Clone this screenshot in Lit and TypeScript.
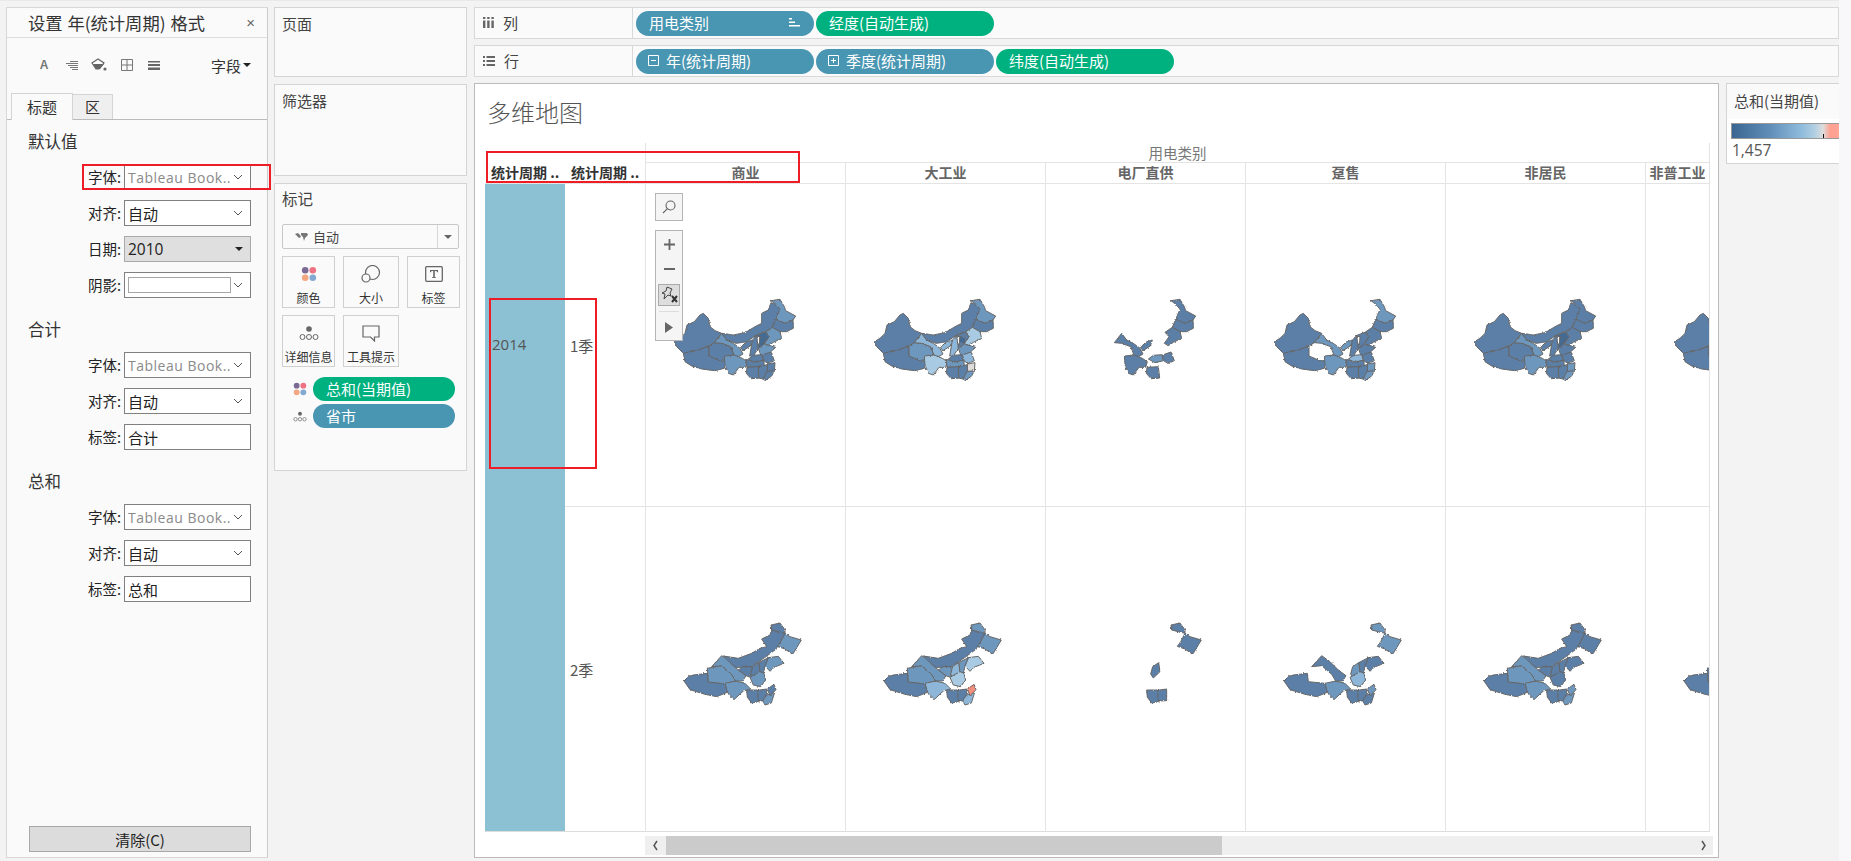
import { LitElement, html, css, svg } from "lit";
import { customElement } from "lit/decorators.js";

const C: Record<string, string> = {
  d: "#5b7fa8", m: "#6e97be", l: "#8db6d8", x: "#a8cbe3", k: "#3f6b98", g: "#dedbd9", s: "#f48f7e",
};

const R1: Record<string, string> = {
  xj: "28,155 45,145 60,130 66,105 88,95 105,75 115,70 130,85 135,110 150,122 170,130 148,158 132,168 100,180 65,190 55,190 35,170",
  xz: "55,190 100,180 132,168 132,198 165,212 185,212 178,235 150,242 110,237 80,228 60,215",
  qh: "132,168 148,158 170,160 197,170 207,195 190,205 165,212 132,198",
  gs: "148,158 170,130 185,150 205,160 225,175 234,192 218,202 207,195 197,170 170,160",
  nm: "170,130 205,135 240,128 270,110 290,100 290,70 310,60 318,38 335,45 345,58 332,88 322,112 300,127 280,132 245,155 215,160 185,150",
  hl: "318,32 345,28 358,50 362,62 392,78 384,90 360,100 332,88 345,58 335,45",
  jl: "332,88 360,100 384,90 385,115 365,125 345,125 322,112",
  ln: "322,112 345,125 350,145 325,157 310,167 298,160 312,140 300,127",
  hb: "270,138 300,127 312,140 298,160 285,175 278,170 284,156 285,140",
  bj: "285,140 300,144 298,160 284,156",
  sx: "262,150 275,138 280,175 265,198 254,198",
  sn: "226,172 245,155 262,150 256,168 234,182",
  sd: "280,175 298,162 332,172 312,190 288,197",
  hn: "265,196 290,194 296,212 270,218 250,207",
  js: "292,195 318,186 328,212 310,220 298,214",
  sc: "178,198 207,195 232,205 247,215 242,232 222,232 205,255 190,250 180,225",
  hub: "244,208 270,216 296,210 298,228 280,232 246,232",
  hun: "246,232 280,230 284,264 258,266 244,250",
  jx: "280,230 307,224 308,255 297,268 282,264",
  zj: "307,222 330,218 328,243 308,245",
  fj: "306,244 328,243 320,258 300,272 295,266",
};

const R2: Record<string, string> = {
  xz: "42,198 55,185 70,180 112,175 115,200 165,205 172,232 140,245 105,238 60,224",
  qh: "112,160 155,152 185,178 197,198 170,207 115,201",
  gs: "125,155 155,122 180,140 205,165 228,182 218,198 197,198 185,178 155,152",
  nm: "160,123 205,130 245,115 270,100 290,95 275,72 300,60 305,45 325,50 345,55 332,80 322,100 285,127 245,155 220,157 195,157",
  ns: "205,165 220,155 248,155 242,187 228,182",
  hu: "303,30 330,24 345,45 345,55 325,50 305,45",
  hl: "345,55 360,65 394,75 385,90 368,118 345,102 322,94 332,80",
  ln: "295,128 325,124 342,145 312,157 300,169 285,153",
  hb: "266,143 295,128 285,153 280,174 270,170",
  sx: "248,155 266,143 270,170 250,189 242,177",
  sd: "240,187 270,170 282,175 287,195 272,215 250,210",
  sc: "165,205 197,198 225,205 242,222 220,228 192,254 175,237",
  a: "230,225 262,225 266,260 245,264 232,247",
  b: "262,226 290,222 290,257 266,258",
  c: "290,240 314,232 304,264 285,270 278,257",
  e: "292,222 312,208 318,224 300,242",
};

type Cell = Record<string, string>;
const all1 = (o: Cell = {}): Cell => ({
  xj: "d", xz: "d", qh: "d", gs: "d", nm: "d", hl: "d", jl: "d", ln: "d", hb: "d", bj: "d", sx: "d", sn: "d",
  sd: "d", hn: "d", js: "d", sc: "d", hub: "d", hun: "d", jx: "d", zj: "d", fj: "d", ...o,
});
const all2 = (o: Cell = {}): Cell => ({
  xz: "d", qh: "d", gs: "d", nm: "d", ns: "d", hu: "d", hl: "d", ln: "d", hb: "d", sx: "d", sd: "d", sc: "d", a: "d", b: "d", c: "d", e: "d", ...o,
});

const ROW1: Cell[] = [
  all1({ gs: "m", sc: "m", ln: "m", hl: "m", bj: "k", hb: "k", sd: "m" }),
  all1({ qh: "m", gs: "l", hl: "m", ln: "x", sx: "l", sn: "l", sc: "x", zj: "g", bj: "k", sd: "m", js: "l", hub: "m", fj: "m" }),
  { hl: "d", jl: "d", gs: "d", sn: "d", sc: "d", hun: "d", hn: "m", js: "d", ln: "d" },
  { xj: "d", xz: "d", gs: "m", sn: "m", hb: "d", sd: "d", hn: "l", sc: "m", hl: "m", jl: "d", ln: "d", sx: "d", hub: "d", hun: "d", jx: "d", zj: "m", fj: "m", js: "d" },
  all1({ sc: "m", bj: "k", hb: "k", gs: "m", qh: "d", zj: "m", fj: "m" }),
  { xj: "d", xz: "d", qh: "d", gs: "d" },
];
const ROW2: Cell[] = [
  all2({ gs: "m", sc: "m", qh: "m", hl: "m", ln: "m", sd: "m", c: "m" }),
  all2({ qh: "m", gs: "m", hl: "m", hu: "m", ln: "x", hb: "m", sx: "l", sd: "x", sc: "l", c: "l", e: "s", ns: "m" }),
  { hu: "d", hl: "d", sx: "d", a: "d", b: "d" },
  { xz: "d", sc: "m", hu: "m", hl: "m", ln: "d", hb: "d", sx: "m", sd: "l", a: "d", b: "d", c: "d", e: "m", gs: "d" },
  all2({ sc: "m", qh: "m", gs: "m", e: "m", c: "m" }),
  { xz: "d", qh: "d" },
];

const chev = html`<svg class="chev" width="10" height="6" viewBox="0 0 10 6"><path d="M1 1l4 4 4-4" fill="none" stroke="#555" stroke-width="1"/></svg>`;

const dots4 = (s: number) => html`<svg width=${s} height=${s} viewBox="0 0 16 16">
  <circle cx="4.2" cy="4.2" r="3.3" fill="#7b6a94"/><circle cx="11.8" cy="4.2" r="3.3" fill="#ef7284"/>
  <circle cx="4.2" cy="11.8" r="3.3" fill="#f2a782"/><circle cx="11.8" cy="11.8" r="3.3" fill="#83a8d1"/></svg>`;
const dotsDetail = (s: number) => html`<svg width=${s} height=${Math.round(s * 0.8)} viewBox="0 0 20 16">
  <circle cx="10" cy="4" r="2.8" fill="#666"/>
  <g fill="none" stroke="#666" stroke-width="1"><circle cx="3.5" cy="12" r="2.5"/><circle cx="10" cy="12" r="2.5"/><circle cx="16.5" cy="12" r="2.5"/></g></svg>`;

@customElement("app-root")
export class AppRoot extends LitElement {
  static styles = css`
    :host { display: block; width: 1851px; height: 861px; background: #f8f8fb; overflow: hidden;
      font-family: "Noto Sans CJK SC", "Open Sans", sans-serif; color: #333; font-size: 14px; position: relative; }
    * { box-sizing: border-box; }
    .page { width: 1839px; height: 861px; background: #f3f3f3; border-top: 1px solid #e9e9e9; padding: 6px 0 3px 6px;
      display: grid; grid-template-columns: 262px 193px 1fr; column-gap: 6px; }
    .fmt { background: #fafafa; border: 1px solid #d8d8d8; border-right-color: #ccc; display: flex; flex-direction: column; }
    .fmt-title { height: 30px; border-bottom: 1px solid #ddd; display: flex; align-items: center; justify-content: space-between;
      padding: 0 12px 0 21px; font-size: 17.3px; color: #333; white-space: nowrap; word-spacing: 1px; }
    .x { font-size: 15px; color: #666; font-family: "Liberation Sans", sans-serif; }
    .tools { height: 54px; display: flex; align-items: center; padding: 0 16px 0 29px; gap: 11.5px; }
    .tools .tb { width: 16px; display: flex; justify-content: center; }
    .a { font: bold 12px "Liberation Sans", sans-serif; color: #777; }
    .field { margin-left: auto; display: flex; align-items: center; gap: 2px; font-size: 15px; color: #333; }
    .tri { width: 0; height: 0; border-left: 4px solid transparent; border-right: 4px solid transparent; border-top: 4px solid #222; }
    .tabs { height: 28px; display: flex; align-items: flex-end; padding-left: 4px; border-bottom: 1px solid #bbb; font-size: 15px; }
    .tab { height: 27px; width: 62px; border: 1px solid #d4d4d4; border-bottom: 0; background: #fafafa; display: flex; align-items: center;
      justify-content: center; margin-bottom: -1px; padding-bottom: 2px; }
    .tab.off { height: 25px; width: 41px; background: #efefef; margin-bottom: 0; margin-left: -1px; }
    .form { padding-top: 11px; flex: 1; display: flex; flex-direction: column; }
    .sec { margin-bottom: 21px; }
    .sec-h { height: 24px; line-height: 20px; font-size: 16.5px; padding-left: 21px; margin-bottom: 9px; color: #333; }
    .row { display: grid; grid-template-columns: 114px 127px; column-gap: 3px; margin-bottom: 10px; align-items: center; }
    .row:last-child { margin-bottom: 0; }
    .row label { text-align: right; font-size: 14.5px; color: #222; line-height: 24px; }
    .ctl { height: 26px; border: 1px solid #808080; background: #fff; display: flex; align-items: center; padding: 0 7px 0 3px;
      justify-content: space-between; font-size: 15px; color: #222; overflow: hidden; white-space: nowrap; }
    .ctl.font { color: #8a8a8a; font-family: "Open Sans", sans-serif; font-size: 14px; letter-spacing: .5px; }
    .ctl.date { background: #dfdfdf; border-color: #aaa; font-family: "Open Sans", sans-serif; font-size: 15.5px; }
    .shade { width: 103px; height: 16px; border: 1px solid #a6a6a6; }
    .clear { margin: auto 16px 5px 22px; height: 26px; background: #dcdcdc; border: 1px solid #a8a8a8; display: flex; align-items: center;
      justify-content: center; font-size: 15px; color: #222; }

    .mid { display: flex; flex-direction: column; gap: 7px; }
    .card { background: #fafafa; border: 1px solid #d4d4d4; padding: 5px 7px; font-size: 15px; color: #444; }
    .c1 { height: 70px; } .c2 { height: 92px; } .c3 { height: 288px; }
    .card-h { height: 22px; line-height: 22px; }
    .c3 .card-h { font-size: 15.5px; height: 22px; margin-bottom: 2px; margin-top: -2px; }
    .sel { margin-top: 15px; height: 25px; border: 1px solid #c8c8c8; border-radius: 2px; background: #fafafa; display: grid; grid-template-columns: 155px 1fr; font-size: 13px; }
    .sel-l { display: flex; align-items: center; gap: 5px; padding-left: 12px; border-right: 1px solid #d8d8d8; }
    .sel-r { display: flex; align-items: center; justify-content: center; }
    .tri.g { border-top-color: #666; }
    .btns { margin-top: 7px; display: grid; grid-template-columns: 53px 56px 53px; column-gap: 8px; row-gap: 7px; width: 177px; grid-auto-rows: 52px; }
    .mb { border: 1px solid #d0d0d0; display: flex; flex-direction: column; align-items: center; font-size: 12px; color: #333; padding-top: 4px; white-space: nowrap; }
    .mb .ic { height: 26px; display: flex; align-items: center; }
    .mb .lb { height: 18px; line-height: 18px; margin-top: 2px; }
    .mark { display: grid; grid-template-columns: 14px 1fr; column-gap: 6px; align-items: center; padding-left: 11px; width: 173px; margin-top: 3px; }
    .mark.first { margin-top: 10px; }
    .pill { height: 24px; border-radius: 12px; color: #fff; font-size: 15px; display: flex; align-items: center; white-space: nowrap; padding-bottom: 1px; }
    .pill.b { background: #4996b2; } .pill.g { background: #00b180; }
    .mark .pill { padding-left: 13px; }

    .right { display: flex; flex-direction: column; gap: 6px; min-width: 0; margin-left: 1px; }
    .shelf { height: 32px; background: #fafafa; border: 1px solid #d8d8d8; display: grid; grid-template-columns: 158px 1fr; }
    .shelf-h { border-right: 1px solid #d8d8d8; display: flex; align-items: center; padding-left: 8px; gap: 9px; font-size: 15px; color: #444; padding-bottom: 1px; }
    .shelf-p { display: flex; align-items: center; gap: 2px; padding-left: 3px; }
    .shelf .pill { width: 178px; padding-left: 13px; position: relative; height: 25px; border-radius: 13px; }
    .shelf .pill.wi { padding-left: 12px; gap: 7px; }
    .sort { margin-left: auto; margin-right: 14px; display: flex; }
    .bottom { flex: 1; display: grid; grid-template-columns: 1245px 1fr; column-gap: 7px; min-height: 0; }
    .view { background: #fff; border: 1px solid #bbb; padding: 0 0 0 10px; overflow: hidden; position: relative; }
    .vt { height: 59px; padding: 10px 0 0 2px; font-size: 24px; font-weight: 300; line-height: 36px; color: #555; }
    .plot { width: 1225px; display: grid; grid-template-columns: 80px 80px repeat(5, 200px) 65px; grid-template-rows: 20px 21px 323px 324px; border-bottom: 1px solid #ddd; }
    .top { grid-column: 3 / -1; border-left: 1px solid #e4e4e4; border-right: 1px solid #e4e4e4; border-bottom: 1px solid #e4e4e4;
      text-align: center; font-size: 14.5px; color: #777; line-height: 20px; }
    .blank { grid-column: 1 / 3; }
    .lab { font-size: 14px; font-weight: 700; color: #333; white-space: nowrap; border-bottom: 1px solid #e4e4e4; padding-left: 6px; line-height: 19px; overflow: hidden; }
    .colh { font-size: 14px; font-weight: 700; color: #666; text-align: center; border-left: 1px solid #e4e4e4; border-bottom: 1px solid #e4e4e4; line-height: 19px; white-space: nowrap; overflow: hidden; }
    .colh.end { border-right: 1px solid #e4e4e4; }
    .year { background: #8bc1d2; display: flex; align-items: center; padding: 0 0 4px 7px; color: #555; font-size: 15px; font-family: "Open Sans", sans-serif; }
    .q { display: flex; align-items: center; padding-left: 5px; color: #555; font-size: 15px; }
    .q.r1 { border-bottom: 1px solid #e4e4e4; }
    .cell { border-left: 1px solid #e4e4e4; overflow: hidden; position: relative; }
    .cell.r1 { border-bottom: 1px solid #e4e4e4; padding: 106px 0 0 19px; }
    .cell.r2 { padding: 108px 0 0 24px; }
    .cell.end { border-right: 1px solid #e4e4e4; }
    .cell svg { display: block; }
    .scroll { margin: 4px 0 0 160px; width: 1068px; height: 19px; background: #efefef; display: flex; align-items: center; }
    .arrow { width: 21px; display: flex; justify-content: center; color: #555; }
    .thumb { width: 556px; height: 19px; background: #cbcbcb; }
    .arrow.r { margin-left: auto; width: 20px; }
    .mz { position: absolute; left: 655px; top: 193px; z-index: 3; display: flex; flex-direction: column; gap: 9px; }
    .box { width: 28px; background: #f5f5f5; border: 1px solid #b5b5b5; display: flex; flex-direction: column; align-items: center; }
    .box.s { height: 28px; justify-content: center; }
    .box.t { height: 111px; padding-top: 1px; }
    .zb { height: 25px; width: 22px; display: flex; align-items: center; justify-content: center; }
    .zb.plus { height: 26px; }
    .zb.pin { background: #ddd; border: 1px solid #aaa; height: 22px; margin-top: 3px; }
    .sep { width: 20px; height: 1px; background: #ddd; margin: 5px 0 4px; }
    .legend { height: 81px; background: #fff; border: 1px solid #d4d4d4; border-right: 0; display: flex; flex-direction: column; }
    .lg-h { height: 35px; background: #fafafa; padding: 7px 0 0 7px; font-size: 15px; line-height: 20px; color: #444; }
    .bar { margin: 4px 0 0 4px; height: 16px; border: 1px solid #999; border-right: 0; position: relative;
      background: linear-gradient(90deg, #3a6592 0%, #5f8db8 35%, #8fbcdc 65%, #b4d0e2 78%, #ddd 85%, #ff9f8f 92%, #ffa698 100%); }
    .tick { position: absolute; left: 91px; bottom: 0; width: 1px; height: 4px; background: #111; }
    .num { padding-left: 5px; font-family: "Open Sans", sans-serif; font-size: 15.5px; line-height: 22px; color: #555; }
    .red { position: absolute; border: 2px solid #ee1c25; z-index: 5; pointer-events: none; }
    .red.a1 { left: 82px; top: 164px; width: 189px; height: 26px; }
    .red.a2 { left: 486px; top: 151px; width: 314px; height: 32px; }
    .red.a3 { left: 489px; top: 298px; width: 108px; height: 171px; }
  `;

  private mapSvg(polys: Record<string, string>, cell: Cell, w = 140) {
    return html`<svg width=${w} height="100" viewBox="0 0 ${w * 3} 300">
      <defs>${svg`<filter id="rough" filterUnits="userSpaceOnUse" x="0" y="0" width="420" height="300">
        <feTurbulence type="fractalNoise" baseFrequency="0.2" numOctaves="2" seed="4" result="n"/>
        <feDisplacementMap in="SourceGraphic" in2="n" scale="7" xChannelSelector="R" yChannelSelector="G"/>
        <feGaussianBlur stdDeviation="1"/>
      </filter>`}</defs>
      ${svg`<g filter="url(#rough)">${Object.keys(cell).map((k) => svg`<polygon points=${polys[k]} fill=${C[cell[k]]} stroke="#666" stroke-width="3" stroke-linejoin="round"/>`)}</g>`}
    </svg>`;
  }

  private row(label: string, body: unknown) {
    return html`<div class="row"><label>${label}</label>${body}</div>`;
  }

  private fontCtl() { return html`<div class="ctl font"><span>Tableau Book..</span>${chev}</div>`; }
  private autoCtl() { return html`<div class="ctl"><span>自动</span>${chev}</div>`; }

  private leftPanel() {
    return html`<div class="fmt">
      <div class="fmt-title"><span>设置 年(统计周期) 格式</span><span class="x">×</span></div>
      <div class="tools">
        <span class="tb a">A</span>
        <span class="tb"><svg width="12" height="11" viewBox="0 0 12 11"><path d="M4 1.5h8M0 3.5h12M2 5.5h10M4 7.5h8M6 9.5h6" stroke="#777" fill="none"/></svg></span>
        <span class="tb"><svg width="16" height="14" viewBox="0 0 16 14"><path d="M1 5l6-4 6 4-5 6H5z" fill="#fff" stroke="#666" stroke-width="1.2"/><path d="M2 6h11l-4 5H5z" fill="#666"/><circle cx="14" cy="11" r="1.6" fill="#666"/></svg></span>
        <span class="tb"><svg width="12" height="12" viewBox="0 0 12 12"><path d="M.5.5h11v11H.5zM6 .5v11M.5 6h11" fill="none" stroke="#777"/></svg></span>
        <span class="tb"><svg width="12" height="10" viewBox="0 0 12 10"><path d="M0 1h12v1.4H0zM0 4h12v2H0zM0 7.6h12V10H0z" fill="#666"/></svg></span>
        <span class="field">字段<span class="tri"></span></span>
      </div>
      <div class="tabs"><div class="tab">标题</div><div class="tab off">区</div></div>
      <div class="form">
        <div class="sec">
          <div class="sec-h">默认值</div>
          ${this.row("字体:", this.fontCtl())}
          ${this.row("对齐:", this.autoCtl())}
          ${this.row("日期:", html`<div class="ctl date"><span>2010</span><span class="tri"></span></div>`)}
          ${this.row("阴影:", html`<div class="ctl"><span class="shade"></span>${chev}</div>`)}
        </div>
        <div class="sec">
          <div class="sec-h">合计</div>
          ${this.row("字体:", this.fontCtl())}
          ${this.row("对齐:", this.autoCtl())}
          ${this.row("标签:", html`<div class="ctl"><span>合计</span></div>`)}
        </div>
        <div class="sec">
          <div class="sec-h">总和</div>
          ${this.row("字体:", this.fontCtl())}
          ${this.row("对齐:", this.autoCtl())}
          ${this.row("标签:", html`<div class="ctl"><span>总和</span></div>`)}
        </div>
        <div class="clear">清除(C)</div>
      </div>
    </div>`;
  }

  private middle() {
    return html`<div class="mid">
      <div class="card c1"><div class="card-h">页面</div></div>
      <div class="card c2"><div class="card-h">筛选器</div></div>
      <div class="card c3">
        <div class="card-h">标记</div>
        <div class="sel">
          <div class="sel-l">
            <svg width="13" height="10" viewBox="0 0 13 10"><path d="M0 2l3-1 2 2 1 2-2 1zM6 1l6 0 1 2-3 3-1 3-1-4-2-2z" fill="#777"/></svg>
            <span>自动</span></div>
          <div class="sel-r"><span class="tri g"></span></div>
        </div>
        <div class="btns">
          <div class="mb"><span class="ic">${dots4(16)}</span><span class="lb">颜色</span></div>
          <div class="mb"><span class="ic"><svg width="20" height="18" viewBox="0 0 20 18"><circle cx="11.5" cy="7.5" r="7" fill="none" stroke="#666" stroke-width="1.2"/><circle cx="5" cy="13" r="4" fill="#fafafa" stroke="#666" stroke-width="1.2"/></svg></span><span class="lb">大小</span></div>
          <div class="mb"><span class="ic"><svg width="18" height="16" viewBox="0 0 18 16"><rect x=".7" y=".7" width="16.6" height="14.6" rx="1" fill="none" stroke="#666" stroke-width="1.3"/><path d="M5 4h8v2.2h-1L11.5 5H9.8v6.2H11V12H7v-.8h1.2V5H6.5L6 6.2H5z" fill="#666"/></svg></span><span class="lb">标签</span></div>
          <div class="mb"><span class="ic">${dotsDetail(20)}</span><span class="lb">详细信息</span></div>
          <div class="mb"><span class="ic"><svg width="18" height="17" viewBox="0 0 18 17"><path d="M1 1h16v11h-4.5v4l-4-4H1z" fill="none" stroke="#666" stroke-width="1.2"/></svg></span><span class="lb">工具提示</span></div>
        </div>
        <div class="mark first">${dots4(14)}<div class="pill g">总和(当期值)</div></div>
        <div class="mark">${dotsDetail(14)}<div class="pill b">省市</div></div>
      </div>
    </div>`;
  }

  private shelves() {
    const minus = html`<svg width="11" height="11" viewBox="0 0 11 11"><path d="M.5.5h10v10H.5zM3 5.5h5" fill="none" stroke="#fff"/></svg>`;
    const plus = html`<svg width="11" height="11" viewBox="0 0 11 11"><path d="M.5.5h10v10H.5zM3 5.5h5M5.5 3v5" fill="none" stroke="#fff"/></svg>`;
    return html`
      <div class="shelf">
        <div class="shelf-h"><svg width="11" height="11" viewBox="0 0 11 11"><path d="M0 0h2.4v2H0zM4.2 0h2.4v2H4.2zM8.4 0h2.4v2H8.4zM0 3.5h2.4V11H0zM4.2 3.5h2.4V11H4.2zM8.4 3.5h2.4V11H8.4z" fill="#666"/></svg><span>列</span></div>
        <div class="shelf-p">
          <div class="pill b"><span>用电类别</span><span class="sort"><svg width="11" height="9" viewBox="0 0 11 9"><path d="M0 0h3v1.4H0zM0 3.5h6v1.4H0zM0 7h11v1.6H0z" fill="#fff"/></svg></span></div>
          <div class="pill g">经度(自动生成)</div>
        </div>
      </div>
      <div class="shelf">
        <div class="shelf-h"><svg width="12" height="10" viewBox="0 0 12 10"><path d="M0 0h2v2H0zM3.5 0H12v2H3.5zM0 4h2v2H0zM3.5 4H12v2H3.5zM0 8h2v2H0zM3.5 8H12v2H3.5z" fill="#666"/></svg><span>行</span></div>
        <div class="shelf-p">
          <div class="pill b wi">${minus}<span>年(统计周期)</span></div>
          <div class="pill b wi">${plus}<span>季度(统计周期)</span></div>
          <div class="pill g">纬度(自动生成)</div>
        </div>
      </div>`;
  }

  private plot() {
    const heads = ["商业", "大工业", "电厂直供", "趸售", "非居民", "非普工业"];
    return html`<div class="plot">
      <div class="blank"></div><div class="top">用电类别</div>
      <div class="lab">统计周期 ..</div><div class="lab">统计周期 ..</div>
      ${heads.map((h, i) => html`<div class="colh ${i === 5 ? "end" : ""}">${h}</div>`)}
      <div class="year">2014</div>
      <div class="q r1">1季</div>
      ${ROW1.map((c, i) => html`<div class="cell r1 ${i === 5 ? "end" : ""}">${this.mapSvg(R1, c)}</div>`)}
      <div class="year"></div>
      <div class="q">2季</div>
      ${ROW2.map((c, i) => html`<div class="cell r2 ${i === 5 ? "end" : ""}">${this.mapSvg(R2, c)}</div>`)}
    </div>`;
  }

  private mapTools() {
    return html`<div class="mz">
      <div class="box s"><svg width="14" height="14" viewBox="0 0 14 14"><circle cx="8.5" cy="5.5" r="4.5" fill="none" stroke="#666" stroke-width="1.1"/><path d="M5.2 8.8L1 13" stroke="#666" stroke-width="1.1"/></svg></div>
      <div class="box t">
        <div class="zb plus"><svg width="11" height="11" viewBox="0 0 11 11"><path d="M0 4.6h11v1.8H0zM4.6 0h1.8v11H4.6z" fill="#666"/></svg></div>
        <div class="zb"><svg width="11" height="2" viewBox="0 0 11 2"><path d="M0 0h11v2H0z" fill="#666"/></svg></div>
        <div class="zb pin"><svg width="19" height="18" viewBox="0 0 19 18"><path d="M7 1l5 2-2 4 1 3-3-1-3 3-1 1 1-5-3-1 4-2z" fill="none" stroke="#444"/><path d="M12 10l5 6M17 10l-5 6" stroke="#333" stroke-width="2"/></svg></div>
        <div class="sep"></div>
        <div class="zb"><svg width="8" height="11" viewBox="0 0 8 11"><path d="M0 0l8 5.5L0 11z" fill="#666"/></svg></div>
      </div>
    </div>`;
  }

  render() {
    return html`<div class="page">
      ${this.leftPanel()}
      ${this.middle()}
      <div class="right">
        ${this.shelves()}
        <div class="bottom">
          <div class="view">
            <div class="vt">多维地图</div>
            ${this.plot()}
            <div class="scroll">
              <span class="arrow"><svg width="7" height="11" viewBox="0 0 7 11"><path d="M5 1L2 5.5 5 10" fill="none" stroke="#555" stroke-width="1.5"/></svg></span>
              <div class="thumb"></div>
              <span class="arrow r"><svg width="7" height="11" viewBox="0 0 7 11"><path d="M2 1l3 4.5L2 10" fill="none" stroke="#555" stroke-width="1.5"/></svg></span>
            </div>
          </div>
          <div class="legend">
            <div class="lg-h">总和(当期值)</div>
            <div class="bar"><span class="tick"></span></div>
            <div class="num">1,457</div>
          </div>
        </div>
      </div>
    </div>
    ${this.mapTools()}
    <div class="red a1"></div><div class="red a2"></div><div class="red a3"></div>`;
  }
}
